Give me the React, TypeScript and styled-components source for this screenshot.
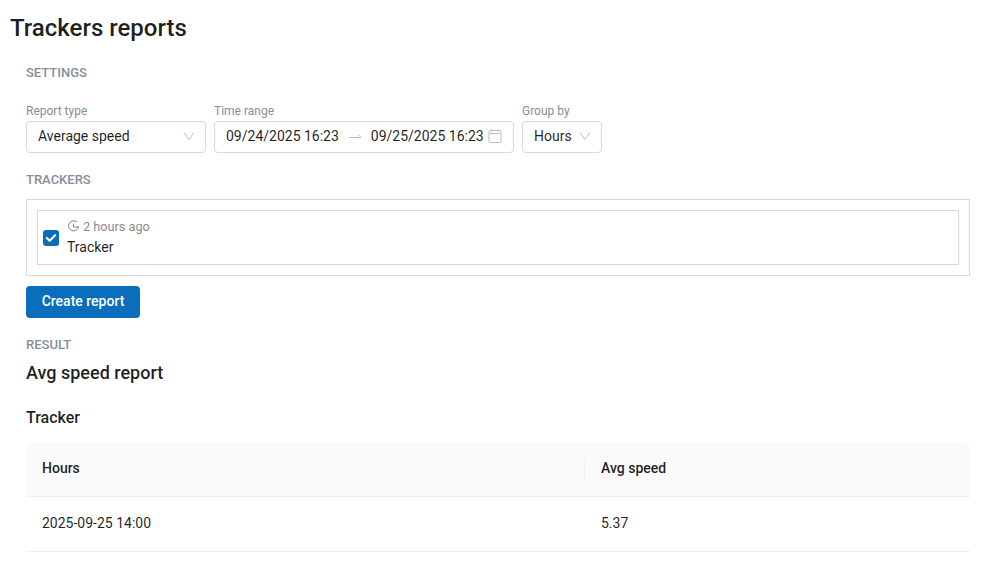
import styled, { createGlobalStyle } from "styled-components";

const GlobalStyle = createGlobalStyle`
  body {
    margin: 0;
    background: #fff;
    font-family: Roboto, "Liberation Sans", sans-serif;
    color: rgba(0, 0, 0, 0.88);
  }
`;

const Chevron = () => (
  <svg width="12" height="12" viewBox="0 0 12 12" fill="none" stroke="#bfbfbf" strokeWidth="1">
    <path d="M1 2.500 6 9.500l5-7" />
  </svg>
);

const CalendarIcon = () => (
  <svg width="14" height="14" viewBox="0 0 14 14" fill="none" stroke="#bfbfbf" strokeWidth="1">
    <rect x="1" y="1.500" width="12" height="12" rx="0.500" />
    <path d="M1 4.500h12M4 0v3M10 0v3" />
  </svg>
);

const ArrowIcon = () => (
  <svg width="14" height="8" viewBox="0 0 14 8" fill="none" stroke="#bfbfbf" strokeWidth="1">
    <path d="M1 5.500h12L10 2.500" />
  </svg>
);

const ClockIcon = () => (
  <svg width="13" height="13" viewBox="0 0 13 13" fill="none" stroke="#808080" strokeWidth="1">
    <path d="M10 2.200A5 5 0 1 0 11.500 6.500" />
    <path d="M6.500 3.500v3.500h5.500" />
  </svg>
);

const CheckIcon = () => (
  <svg width="12" height="10" viewBox="0 0 12 10" fill="none" stroke="#fff" strokeWidth="2.200" strokeLinecap="round" strokeLinejoin="round">
    <path d="M1.800 5 4.600 7.800 10.200 2.200" />
  </svg>
);

export default function App() {
  return (
    <Page>
      <GlobalStyle />
      <Title>Trackers reports</Title>
      <Content>
        <SectionLabel $top={0}>SETTINGS</SectionLabel>
        <Filters>
          <Field>
            <FieldLabel>Report type</FieldLabel>
            <Control $width={180}>
              <span>Average speed</span>
              <Chevron />
            </Control>
          </Field>
          <Field>
            <FieldLabel>Time range</FieldLabel>
            <RangeControl $width={300}>
              <span>09/24/2025 16:23</span>
              <RangeArrow>
                <ArrowIcon />
              </RangeArrow>
              <span>09/25/2025 16:23</span>
              <CalendarIcon />
            </RangeControl>
          </Field>
          <Field>
            <FieldLabel>Group by</FieldLabel>
            <Control $width={80}>
              <span>Hours</span>
              <Chevron />
            </Control>
          </Field>
        </Filters>
        <SectionLabel $top={19}>TRACKERS</SectionLabel>
        <TrackerBox>
          <TrackerRow>
            <Checkbox>
              <CheckIcon />
            </Checkbox>
            <TrackerInfo>
              <LastSeen>
                <ClockIcon />
                2 hours ago
              </LastSeen>
              <TrackerName>Tracker</TrackerName>
            </TrackerInfo>
          </TrackerRow>
        </TrackerBox>
        <PrimaryButton>Create report</PrimaryButton>
        <SectionLabel $top={19}>RESULT</SectionLabel>
        <ReportTitle>Avg speed report</ReportTitle>
        <TrackerTitle>Tracker</TrackerTitle>
        <ReportTable>
          <thead>
            <tr>
              <th>Hours</th>
              <th>Avg speed</th>
            </tr>
          </thead>
          <tbody>
            <tr>
              <td>2025-09-25 14:00</td>
              <td>5.37</td>
            </tr>
          </tbody>
        </ReportTable>
      </Content>
    </Page>
  );
}

const Page = styled.div`
  padding: 12px 19px 26px 10px;
`;

const Title = styled.h1`
  margin: 0;
  font-size: 24px;
  line-height: 32px;
  font-weight: 500;
`;

const Content = styled.div`
  padding: 21px 0 0 16px;
`;

const SectionLabel = styled.div<{ $top: number }>`
  margin-top: ${(p) => p.$top}px;
  font-size: 13px;
  line-height: 16px;
  font-weight: 500;
  color: #868e9a;
`;

const Filters = styled.div`
  display: flex;
  gap: 8px;
  margin-top: 22px;
`;

const Field = styled.div`
  display: flex;
  flex-direction: column;
`;

const FieldLabel = styled.label`
  font-size: 12px;
  line-height: 16px;
  color: #868e9a;
`;

const Control = styled.div<{ $width: number }>`
  box-sizing: border-box;
  width: ${(p) => p.$width}px;
  height: 32px;
  margin-top: 2px;
  padding: 0 10px 2px 11px;
  display: flex;
  align-items: center;
  justify-content: space-between;
  border: 1px solid #d9d9d9;
  border-radius: 4px;
  font-size: 14px;
`;

const RangeControl = styled(Control)`
  justify-content: flex-start;
  gap: 4px;
`;

const RangeArrow = styled.span`
  display: flex;
  margin: 0 5px;
`;

const TrackerBox = styled.div`
  margin-top: 11px;
  padding: 10px;
  border: 1px solid #d9d9d9;
`;

const TrackerRow = styled.div`
  display: flex;
  align-items: center;
  gap: 8px;
  height: 53px;
  padding-left: 5px;
  border: 1px solid #d9d9d9;
`;

const Checkbox = styled.span`
  width: 16px;
  height: 16px;
  display: flex;
  align-items: center;
  justify-content: center;
  border-radius: 3px;
  background: #0a6ebd;
`;

const TrackerInfo = styled.div`
  padding-bottom: 2px;
`;

const LastSeen = styled.div`
  display: flex;
  align-items: center;
  gap: 3px;
  font-size: 12.7px;
  line-height: 20px;
  color: #8c8c8c;
`;

const TrackerName = styled.div`
  font-size: 14px;
  line-height: 20px;
`;

const PrimaryButton = styled.button`
  display: block;
  height: 32px;
  width: 114px;
  margin-top: 10px;
  padding: 0 0 2px;
  border: 0;
  border-radius: 4px;
  background: #0a6ebd;
  color: #fff;
  font-family: inherit;
  font-size: 14px;
  font-weight: 500;
`;

const ReportTitle = styled.h2`
  margin: 8px 0 0;
  font-size: 18px;
  line-height: 24px;
  font-weight: 500;
`;

const TrackerTitle = styled.h3`
  margin: 21px 0 0;
  font-size: 16px;
  line-height: 24px;
  font-weight: 500;
`;

const ReportTable = styled.table`
  width: 100%;
  margin-top: 12px;
  border-collapse: separate;
  border-spacing: 0;
  font-size: 14px;
  table-layout: fixed;

  th {
    position: relative;
    box-sizing: border-box;
    height: 55px;
    padding: 0 16px 2px;
    text-align: left;
    font-weight: 500;
    background: #fafafa;
    border-bottom: 1px solid #f0f0f0;
  }
  th:first-child {
    width: 559px;
    border-top-left-radius: 8px;
  }
  th:last-child {
    border-top-right-radius: 8px;
  }
  th:first-child::after {
    content: "";
    position: absolute;
    right: 0;
    top: 50%;
    width: 1px;
    height: 22px;
    transform: translateY(-50%);
    background: #f0f0f0;
  }
  td {
    box-sizing: border-box;
    height: 55px;
    padding: 0 16px 2px;
    border-bottom: 1px solid #f0f0f0;
  }
`;
